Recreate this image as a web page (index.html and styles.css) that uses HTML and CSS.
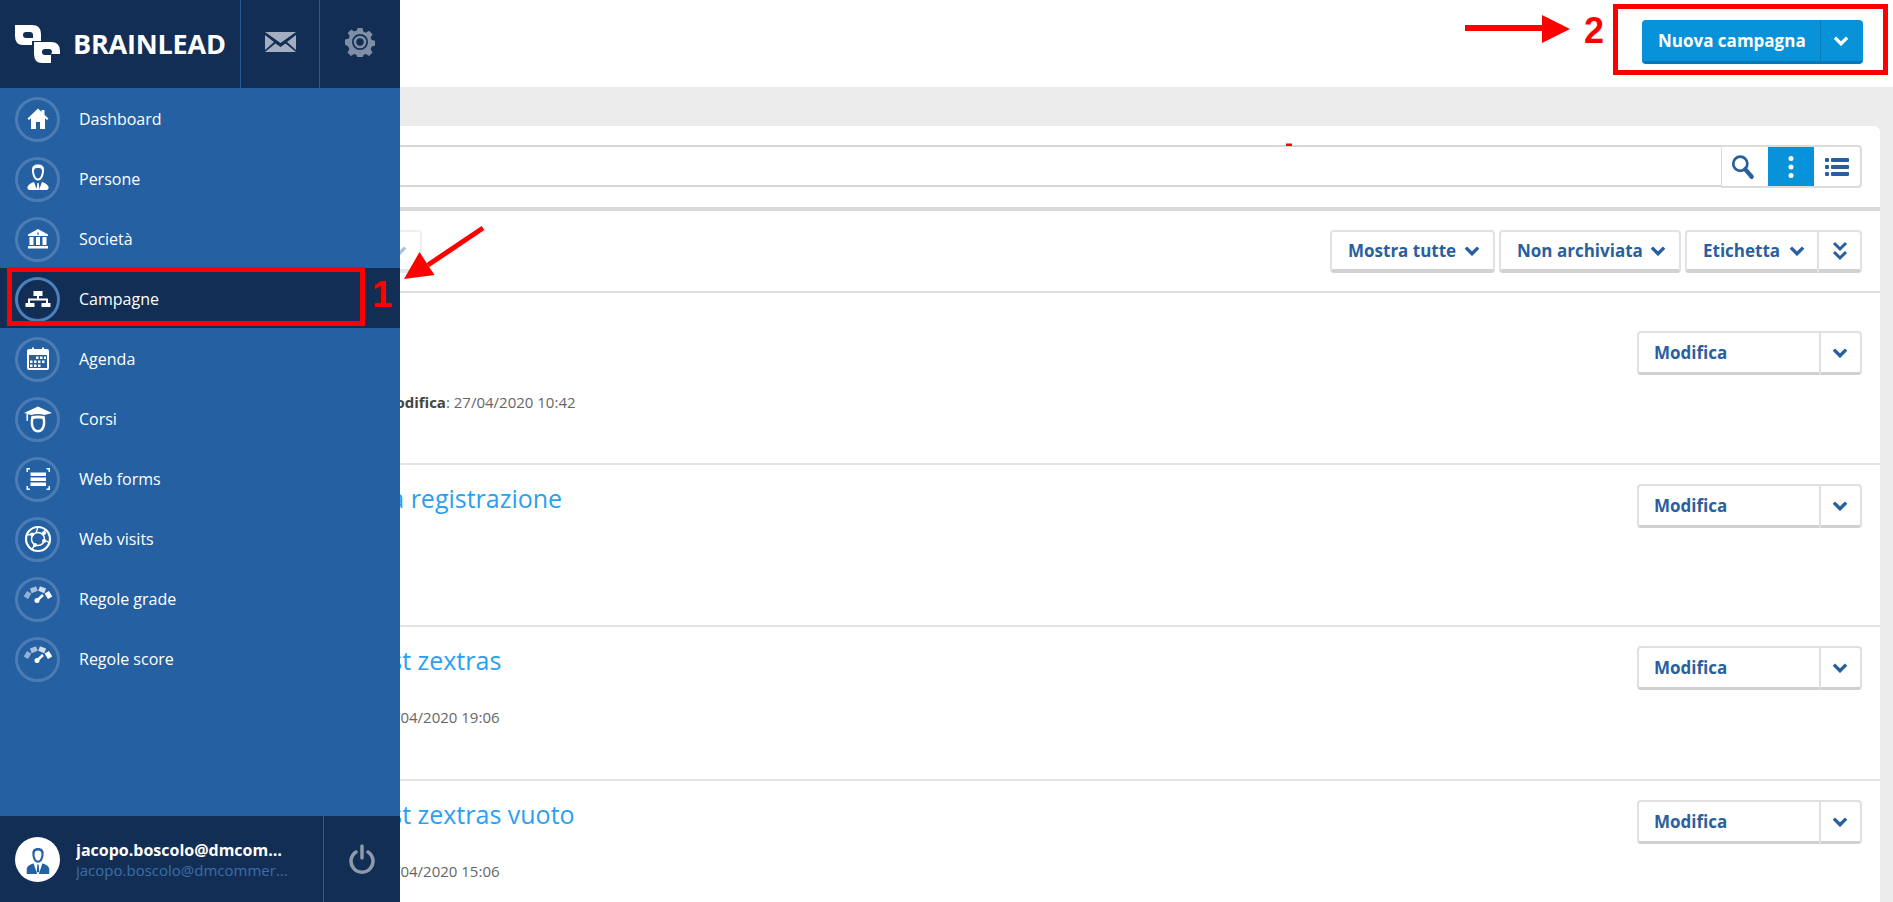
FILE: index.html
```html
<!DOCTYPE html>
<html lang="it">
<head>
    <meta charset="UTF-8">
    <title>Campagne</title>
    <link rel="stylesheet" href="styles.css">
</head>
<body>
    <div class="page">
        <div class="topbar">
            <div class="split_btn split_primary">
                <a class="split_main" href="#">Nuova campagna</a>
                <a class="split_arrow" href="#"><svg class="chev" viewBox="0 0 14 9"><path d="M1.500 1.500 7 7l5.500-5.500"/></svg></a>
            </div>
        </div>

        <div class="content">
            <div class="card">
                <div class="search_row">
                    <div class="search_input"></div>
                    <div class="search_tools">
                        <a class="tool tool_search" href="#"><svg width="24" height="26" viewBox="0 0 22 24"><circle cx="8.500" cy="9" r="6.500" fill="none" stroke="#2a5f9f" stroke-width="2.500"/><path d="M13 14l6 7" stroke="#2a5f9f" stroke-width="4" stroke-linecap="round"/></svg></a>
                        <a class="tool tool_on" href="#"><svg width="8" height="24" viewBox="0 0 8 24"><circle cx="4" cy="3.500" r="2.500" fill="#fff"/><circle cx="4" cy="12" r="2.500" fill="#fff"/><circle cx="4" cy="20.500" r="2.500" fill="#fff"/></svg></a>
                        <a class="tool" href="#"><svg width="24" height="20" viewBox="0 0 24 20" fill="#2a5f9f"><rect x="0" y="1" width="4" height="4" rx="1"/><rect x="6" y="1" width="18" height="4" rx="1"/><rect x="0" y="8" width="4" height="4" rx="1"/><rect x="6" y="8" width="18" height="4" rx="1"/><rect x="0" y="15" width="4" height="4" rx="1"/><rect x="6" y="15" width="18" height="4" rx="1"/></svg></a>
                    </div>
                </div>

                <div class="filter_row">
                    <a class="btn btn_faded" href="#">Azioni <svg class="chev chev_pale" viewBox="0 0 14 9"><path d="M1.500 1.500 7 7l5.500-5.500"/></svg></a>
                    <div class="filter_right">
                        <a class="btn btn_mostra" href="#">Mostra tutte <svg class="chev" viewBox="0 0 14 9"><path d="M1.500 1.500 7 7l5.500-5.500"/></svg></a>
                        <a class="btn btn_arch" href="#">Non archiviata <svg class="chev" viewBox="0 0 14 9"><path d="M1.500 1.500 7 7l5.500-5.500"/></svg></a>
                        <div class="btn_group">
                            <a class="btn btn_label" href="#">Etichetta <svg class="chev" viewBox="0 0 14 9"><path d="M1.500 1.500 7 7l5.500-5.500"/></svg></a>
                            <a class="btn btn_more" href="#"><svg width="16" height="20" viewBox="0 0 16 20" fill="none" stroke="#2a5f9f" stroke-width="3"><path d="M2 2l6 6 6-6M2 11l6 6 6-6"/></svg></a>
                        </div>
                    </div>
                </div>

                <div class="row row_one">
                    <div class="row_body">
                        <a class="row_title" href="#">Prova</a>
                        <div class="row_date date_one"><b>Ultima modifica</b>: 27/04/2020 10:42</div>
                    </div>
                    <div class="split_btn split_plain">
                        <a class="split_main" href="#">Modifica</a>
                        <a class="split_arrow" href="#"><svg class="chev" viewBox="0 0 14 9"><path d="M1.500 1.500 7 7l5.500-5.500"/></svg></a>
                    </div>
                </div>
                <div class="row row_two">
                    <div class="row_body">
                        <a class="row_title title_reg" href="#">Campagna a registrazione</a>
                    </div>
                    <div class="split_btn split_plain">
                        <a class="split_main" href="#">Modifica</a>
                        <a class="split_arrow" href="#"><svg class="chev" viewBox="0 0 14 9"><path d="M1.500 1.500 7 7l5.500-5.500"/></svg></a>
                    </div>
                </div>
                <div class="row row_three">
                    <div class="row_body">
                        <a class="row_title" href="#">Campagna test zextras</a>
                        <div class="row_date date_test"><b>Ultima modifica</b>: 24/04/2020 19:06</div>
                    </div>
                    <div class="split_btn split_plain">
                        <a class="split_main" href="#">Modifica</a>
                        <a class="split_arrow" href="#"><svg class="chev" viewBox="0 0 14 9"><path d="M1.500 1.500 7 7l5.500-5.500"/></svg></a>
                    </div>
                </div>
                <div class="row row_four">
                    <div class="row_body">
                        <a class="row_title" href="#">Campagna test zextras vuoto</a>
                        <div class="row_date date_test"><b>Ultima modifica</b>: 24/04/2020 15:06</div>
                    </div>
                    <div class="split_btn split_plain">
                        <a class="split_main" href="#">Modifica</a>
                        <a class="split_arrow" href="#"><svg class="chev" viewBox="0 0 14 9"><path d="M1.500 1.500 7 7l5.500-5.500"/></svg></a>
                    </div>
                </div>
            </div>
        </div>
    </div>

    <!-- menu laterale aperto sopra la pagina -->
    <div class="sidebar">
        <div class="side_head">
            <div class="brand">
                <svg width="46" height="40" viewBox="0 0 46 40"><path fill="#fff" fill-rule="evenodd" d="M0 1H17Q26 1 26 10V17H17V21H8Q0 21 0 12zM11 8H15Q18 8 18 11V14H11Q8 14 8 11 8 8 11 8z"/><path fill="#fff" fill-rule="evenodd" d="M19 18H36Q45 18 45 27V30H36V39H27Q19 39 19 30zM30 25H34Q37 25 37 28L36 31H30Q27 31 27 28 27 25 30 25z"/></svg>
                <span class="brand_name">BRAINLEAD</span>
            </div>
            <a class="head_icon" href="#"><svg width="31" height="20" viewBox="0 0 31 20"><path fill="#a3afc0" d="M0 0h31L15.500 11zM0 3l9 7-9 8zM31 3l-9 7 9 8zM10.500 11.500l5 3.500 5-3.500L31 20H0z"/></svg></a>
            <a class="head_icon" href="#"><svg width="30" height="30" viewBox="0 0 30 30"><path fill="#7e8ea4" fill-rule="evenodd" d="M12.500 1h5l.8 3.600 2.600 1.100 3.200-2 3.500 3.500-2 3.200 1.100 2.600 3.600.8v5l-3.600.8-1.100 2.600 2 3.200-3.500 3.500-3.200-2-2.600 1.100-.8 3.600h-5l-.8-3.600-2.600-1.100-3.200 2-3.500-3.500 2-3.200-1.100-2.600L0 17.500v-5l3.600-.8 1.100-2.600-2-3.200 3.500-3.500 3.200 2 2.600-1.100zM15 7a8 8 0 1 0 0 16 8 8 0 0 0 0-16z"/><circle cx="15" cy="15" r="5" fill="none" stroke="#7e8ea4" stroke-width="2.600"/></svg></a>
        </div>

        <ul class="side_nav">
            <li><a href="#"><span class="nav_icon"><svg viewBox="0 0 30 30"><path d="M15 4.500 4.500 14.500l1.500 1.500 2-1.800V25h5v-7h4v7h5V14.200l2 1.800 1.500-1.500-4-3.800V6h-3v2z"/></svg></span>Dashboard</a></li>
            <li><a href="#"><span class="nav_icon"><svg viewBox="0 0 30 30"><path fill-rule="evenodd" d="M15 .500c4 0 6 2 6 5 0 6-2 11-6 11S9 11.500 9 5.500c0-3 2-5 6-5zm0 3.500c-2 0-4 .5-4 2.500 0 4.500 2 8 4 8s4-3.500 4-8c0-2-2-2.500-4-2.500z"/><path d="M11 18l3 8H6c-2-1-2-3-1-4 1-2 3-3 6-4zM19 18l-3 8h8c2-1 2-3 1-4-1-2-3-3-6-4zM14.300 19h1.400l.8 7h-3z"/></svg></span>Persone</a></li>
            <li><a href="#"><span class="nav_icon"><svg viewBox="0 0 30 30"><path fill-rule="evenodd" d="M15 5 25 10.500V12H5V10.500zM15 7.500l-1 3h2z"/><path d="M6.500 13h4v8h-4zM13 13h4v8h-4zM19.500 13h4v8h-4zM5 22h20v2.500H5z"/></svg></span>Società</a></li>
            <li class="nav_on"><a href="#"><span class="nav_icon"><svg viewBox="0 0 30 30"><path d="M10.500 7h9v5h-9zM14 12h2v3h-2zM5 14.500h20v2H5zM5 16h2v3H5zM23 16h2v3h-2zM2.500 19h9v4h-9zM18.500 19h9v4h-9z"/></svg></span>Campagne</a></li>
            <li><a href="#"><span class="nav_icon"><svg viewBox="0 0 30 30"><path fill-rule="evenodd" d="M6 5h3V3.500h2V5h8V3.500h2V5h3q2 0 2 2v17q0 2-2 2H6q-2 0-2-2V7q0-2 2-2zM6 11v13h18V11z"/><path d="M13 12.500h2.500V15H13zM17 12.500h2.500V15H17zM21 12.500h2V15h-2zM7 16.500h2.500V19H7zM11 16.500h2.500V19H11zM15 16.500h2.500V19H15zM19 16.500h2.500V19H19zM7 20.500h2.500V23H7zM11 20.500h2.500V23H11zM15 20.500h2.500V23H15z"/></svg></span>Agenda</a></li>
            <li><a href="#"><span class="nav_icon"><svg viewBox="0 0 30 30"><path d="M15 2.500 29 9l-7.500 2c-4-1.200-9-1.200-13 0L5 10.200V17H3.500V9.600L1 9z"/><path fill-rule="evenodd" d="M8.500 12c4-.8 9-.8 13 0 .6 2 .8 4 .8 6.500 0 6-3 10-7.300 10s-7.300-4-7.300-10c0-2.500.2-4.500.8-6.500zM10.500 15c-.3 1-.4 2.500-.4 3.500 0 4.500 2.200 7.500 4.900 7.500s4.900-3 4.900-7.500c0-1-.1-2.500-.4-3.500-3-.6-6-.6-9 0z"/></svg></span>Corsi</a></li>
            <li><a href="#"><span class="nav_icon"><svg viewBox="0 0 30 30"><path d="M7.500 8.500H23V12H7.500zM7.500 13.500H23V17H7.500zM7.500 18.500H23V22H7.500zM3.500 4h3.500v1.500H5V8H3.500zM27 4h-3.500v1.500H25.500V8H27zM3.500 26h3.500v-1.500H5V22H3.500zM27 26h-3.500v-1.500H25.500V22H27z"/></svg></span>Web forms</a></li>
            <li><a href="#"><span class="nav_icon"><svg viewBox="0 0 30 30"><g fill="none" stroke="#fff"><circle cx="15" cy="15" r="12" stroke-width="2.200"/><circle cx="15" cy="15" r="6.500" stroke-width="1.500"/><path stroke-width="1.300" d="M4 11 10 10M20 9.500 23 5M21.500 16 27 19M12 21 9 25M15 3l-2 6"/></g><circle cx="9" cy="10.500" r="2"/><circle cx="21" cy="9" r="2"/><circle cx="21" cy="17" r="2"/><circle cx="12" cy="21" r="2"/></svg></span>Web visits</a></li>
            <li><a href="#"><span class="nav_icon"><svg viewBox="0 0 30 30"><g fill="none" stroke="#fff" stroke-width="5"><path opacity=".5" d="M2.900 13.800 6.200 8.200"/><path opacity=".6" d="M7.800 6.800 13.900 4.500"/><path opacity=".8" d="M16.100 4.500 22.200 6.800"/><path d="M23.800 8.200 27.100 13.800"/><path stroke-width="2.500" d="M20 11 14.500 16"/></g><circle cx="14" cy="16.500" r="2.500"/></svg></span>Regole grade</a></li>
            <li><a href="#"><span class="nav_icon"><svg viewBox="0 0 30 30"><g fill="none" stroke="#fff" stroke-width="5"><path opacity=".5" d="M2.900 13.800 6.200 8.200"/><path opacity=".6" d="M7.800 6.800 13.900 4.500"/><path opacity=".8" d="M16.100 4.500 22.200 6.800"/><path d="M23.800 8.200 27.100 13.800"/><path stroke-width="2.500" d="M20 11 14.500 16"/></g><circle cx="14" cy="16.500" r="2.500"/></svg></span>Regole score</a></li>
        </ul>

        <div class="side_foot">
            <div class="user">
                <span class="avatar"><svg viewBox="0 0 30 34" fill="#2560a3"><path fill-rule="evenodd" d="M15 2c4.500 0 6.500 2.500 6.500 6 0 6-2.500 11-6.500 11S8.500 14 8.500 8c0-3.500 2-6 6.500-6zm0 3c-2 0-4 1-4 3.500 0 5 2 8 4 8s4-3 4-8C19 6 17 5 15 5z"/><path d="M10 20l4 12H2v-5c0-4 4-6 8-7zM20 20l-4 12h12v-5c0-4-4-6-8-7zM14.200 21h1.600l.7 9h-3z"/></svg></span>
                <div class="user_text">
                    <div class="user_name">jacopo.boscolo@dmcommerce.it</div>
                    <div class="user_mail">jacopo.boscolo@dmcommerce.it</div>
                </div>
            </div>
            <a class="power" href="#"><svg width="26" height="30" viewBox="0 0 26 30" fill="none" stroke="#8f9aa8" stroke-width="3.500" stroke-linecap="round"><path d="M13 2v12"/><path d="M7 8a11 11 0 1 0 12 0"/></svg></a>
        </div>
    </div>

    <!-- note rosse sullo screenshot -->
    <div class="mark_box mark_one"></div>
    <div class="mark_box mark_two"></div>
    <span class="mark_num num_one">1</span>
    <span class="mark_num num_two">2</span>
    <svg class="mark_arrows" width="1893" height="902" viewBox="0 0 1893 902" fill="#f00" stroke="none">
        <path d="M483 228 428 265" stroke="#f00" stroke-width="5"/>
        <path d="M404 279 419.500 252 434.500 275z"/>
        <path d="M1465 28H1545" stroke="#f00" stroke-width="6"/>
        <path d="M1542 15 1570 29 1542 43z"/>
        <path d="M1286 143.500h6v2.500h-6z"/>
    </svg>
</body>
</html>
```

FILE: styles.css
```css
*{
    margin: 0px;
    padding: 0px;
    box-sizing: border-box;
    list-style: none;
}
a{
    text-decoration: none;
}
html,body{
    height: 100%;
    overflow: hidden;
}
body{
    font-family: "Open Sans", "Liberation Sans", sans-serif;
    font-size: 14px;
    color: #666;
    background: #ececec;
}

/* pagina */
.topbar{
    height: 87px;
    background: #fff;
    display: flex;
    justify-content: flex-end;
    align-items: flex-start;
    padding: 20px 30px 0 0;
}
.content{
    padding: 39px 13px 0 13px;
}
.card{
    background: #fff;
    border-radius: 6px 6px 0 0;
    height: 800px;
}
.search_row{
    display: flex;
    height: 85px;
    padding: 19px 18px 0 17px;
    border-bottom: 4px solid #d9d9d9;
}
.search_input{
    flex: 1;
    height: 42px;
    border-top: 2px solid #d6d6d6;
    border-bottom: 2px solid #d6d6d6;
    border-left: 2px solid #d6d6d6;
}
.search_tools{
    display: flex;
    height: 43px;
    background: #fff;
    border: 2px solid #dcdcdc;
    border-left-width: 1px;
    border-radius: 0 4px 4px 0;
}
.tool{
    width: 46px;
    display: flex;
    align-items: center;
    justify-content: center;
}
.tool_search{
    padding-right: 4px;
}
.tool_on{
    background: #0792da;
}
.filter_row{
    display: flex;
    justify-content: space-between;
    height: 82px;
    padding: 19px 18px 0 17px;
    border-bottom: 2px solid #dedede;
}
.filter_right{
    display: flex;
    gap: 4px;
}
.btn{
    height: 43px;
    display: flex;
    align-items: center;
    justify-content: space-between;
    padding: 0 13px 0 16px;
    color: #2a5f9f;
    font-weight: 700;
    font-size: 17px;
    background: #fff;
    border: 2px solid #e2e2e2;
    border-bottom: 4px solid #d2d2d2;
    border-radius: 4px;
}
.btn_faded{
    width: 392px;
    justify-content: flex-end;
    border-color: #efefef;
    border-bottom-color: #e4e4e4;
}
.btn_mostra{
    width: 165px;
}
.btn_arch{
    width: 182px;
}
.btn_group{
    display: flex;
}
.btn_label{
    width: 133px;
    padding-right: 12px;
    border-right-width: 1px;
    border-radius: 4px 0 0 4px;
}
.btn_more{
    width: 44px;
    padding: 0;
    justify-content: center;
    border-left-width: 1px;
    border-radius: 0 4px 4px 0;
}
.chev{
    width: 16px;
    height: 10px;
    fill: none;
    stroke: #2a5f9f;
    stroke-width: 3;
    flex: none;
}
.chev_pale{
    stroke: #a9c2e0;
    margin-left: 12px;
}

/* bottoni doppi */
.split_btn{
    display: flex;
    height: 44px;
    flex: none;
    font-size: 17px;
    font-weight: 700;
}
.split_main{
    display: flex;
    align-items: center;
    flex: 1;
    padding-left: 16px;
    border-radius: 4px 0 0 4px;
}
.split_arrow{
    width: 43px;
    display: flex;
    align-items: center;
    justify-content: center;
    border-radius: 0 4px 4px 0;
}
.split_primary{
    width: 221px;
}
.split_primary .split_main{
    background: #0792da;
    color: #fff;
    border-bottom: 3px solid #0679b8;
}
.split_primary .split_arrow{
    background: #0792da;
    padding-right: 3px;
    border-left: 1px solid #0679b8;
    border-bottom: 3px solid #0679b8;
}
.split_primary .chev{
    stroke: #fff;
}
.split_plain{
    width: 225px;
}
.split_plain .split_main{
    color: #2a5f9f;
    padding-left: 15px;
    border: 2px solid #e0e0e0;
    border-right: 0;
    border-bottom: 3px solid #d0d0d0;
}
.split_plain .split_arrow{
    padding-right: 2px;
    border: 2px solid #e0e0e0;
    border-bottom: 3px solid #d0d0d0;
}

/* righe */
.row{
    display: flex;
    justify-content: space-between;
    padding: 19px 18px 0 17px;
    border-bottom: 2px solid #e4e4e4;
}
.row_one{
    height: 172px;
    padding-top: 38px;
}
.row_two{
    height: 162px;
}
.row_three{
    height: 154px;
}
.row_four{
    height: 154px;
}
.row_body{
    padding-left: 206px;
}
.row_title{
    display: block;
    margin-top: -1px;
    font-size: 25px;
    line-height: 30px;
    color: #2b9ff0;
}
.title_reg{
    margin-left: 23px;
}
.row_date{
    line-height: 20px;
    font-size: 15px;
    color: #666;
    margin-top: 32px;
}
.date_one{
    margin-left: 90px;
}
.date_test{
    margin-left: 14px;
}
.row_date b{
    color: #444;
}

/* menu laterale */
.sidebar{
    position: absolute;
    left: 0;
    top: 0;
    width: 400px;
    height: 100%;
    background: #2560a3;
    display: flex;
    flex-direction: column;
    color: #fff;
}
.side_head{
    height: 88px;
    background: #132e54;
    display: flex;
    flex: none;
}
.brand{
    width: 241px;
    display: flex;
    align-items: center;
    gap: 12px;
    padding: 0 0 0 15px;
    border-right: 1px solid #2a5a96;
}
.brand_name{
    font-size: 27px;
    font-weight: 700;
    color: #fff;
    letter-spacing: -0.2px;
    margin-bottom: 2px;
}
.head_icon{
    width: 79px;
    display: flex;
    align-items: center;
    justify-content: center;
    border-right: 1px solid #2a5a96;
    padding-bottom: 4px;
}
.head_icon:last-child{
    border-right: 0;
}
.side_nav li a{
    height: 60px;
    display: flex;
    align-items: center;
    gap: 19px;
    padding: 2px 0 0 15px;
    color: #fff;
    font-size: 16px;
}
.nav_on{
    background: #132e54;
}
.nav_icon{
    width: 45px;
    height: 45px;
    border: 3px solid rgba(255,255,255,0.18);
    border-radius: 50%;
    display: flex;
    align-items: center;
    justify-content: center;
    flex: none;
}
.nav_on .nav_icon{
    border-color: #4a80bd;
}
.nav_icon svg{
    width: 30px;
    height: 30px;
    fill: #fff;
}
.side_foot{
    margin-top: auto;
    height: 86px;
    background: #132e54;
    display: flex;
}
.user{
    width: 324px;
    display: flex;
    align-items: center;
    gap: 16px;
    padding-left: 15px;
    border-right: 1px solid #2a5a96;
}
.avatar{
    width: 45px;
    height: 45px;
    background: #fff;
    border-radius: 50%;
    display: flex;
    align-items: flex-end;
    justify-content: center;
    overflow: hidden;
    flex: none;
    padding-bottom: 6px;
}
.avatar svg{
    width: 26px;
    height: 30px;
}
.user_text{
    width: 213px;
    padding-top: 2px;
}
.user_name,.user_mail{
    white-space: nowrap;
    overflow: hidden;
    text-overflow: ellipsis;
    line-height: 20px;
}
.user_name{
    font-size: 16px;
    font-weight: 700;
    color: #fff;
}
.user_mail{
    font-size: 15px;
    color: #3a6ea8;
}
.power{
    flex: 1;
    display: flex;
    align-items: center;
    justify-content: center;
}

/* note rosse */
.mark_box{
    position: absolute;
    border: 5px solid #f00;
}
.mark_one{
    left: 7px;
    top: 267px;
    width: 358px;
    height: 59px;
}
.mark_two{
    left: 1613px;
    top: 4px;
    width: 275px;
    height: 71px;
}
.mark_num{
    position: absolute;
    font-family: "Liberation Sans", sans-serif;
    font-weight: 700;
    color: #f00;
    font-size: 36px;
    line-height: 40px;
}
.num_one{
    left: 372px;
    top: 275px;
}
.num_two{
    left: 1584px;
    top: 11px;
}
.mark_arrows{
    position: absolute;
    left: 0;
    top: 0;
}
```
